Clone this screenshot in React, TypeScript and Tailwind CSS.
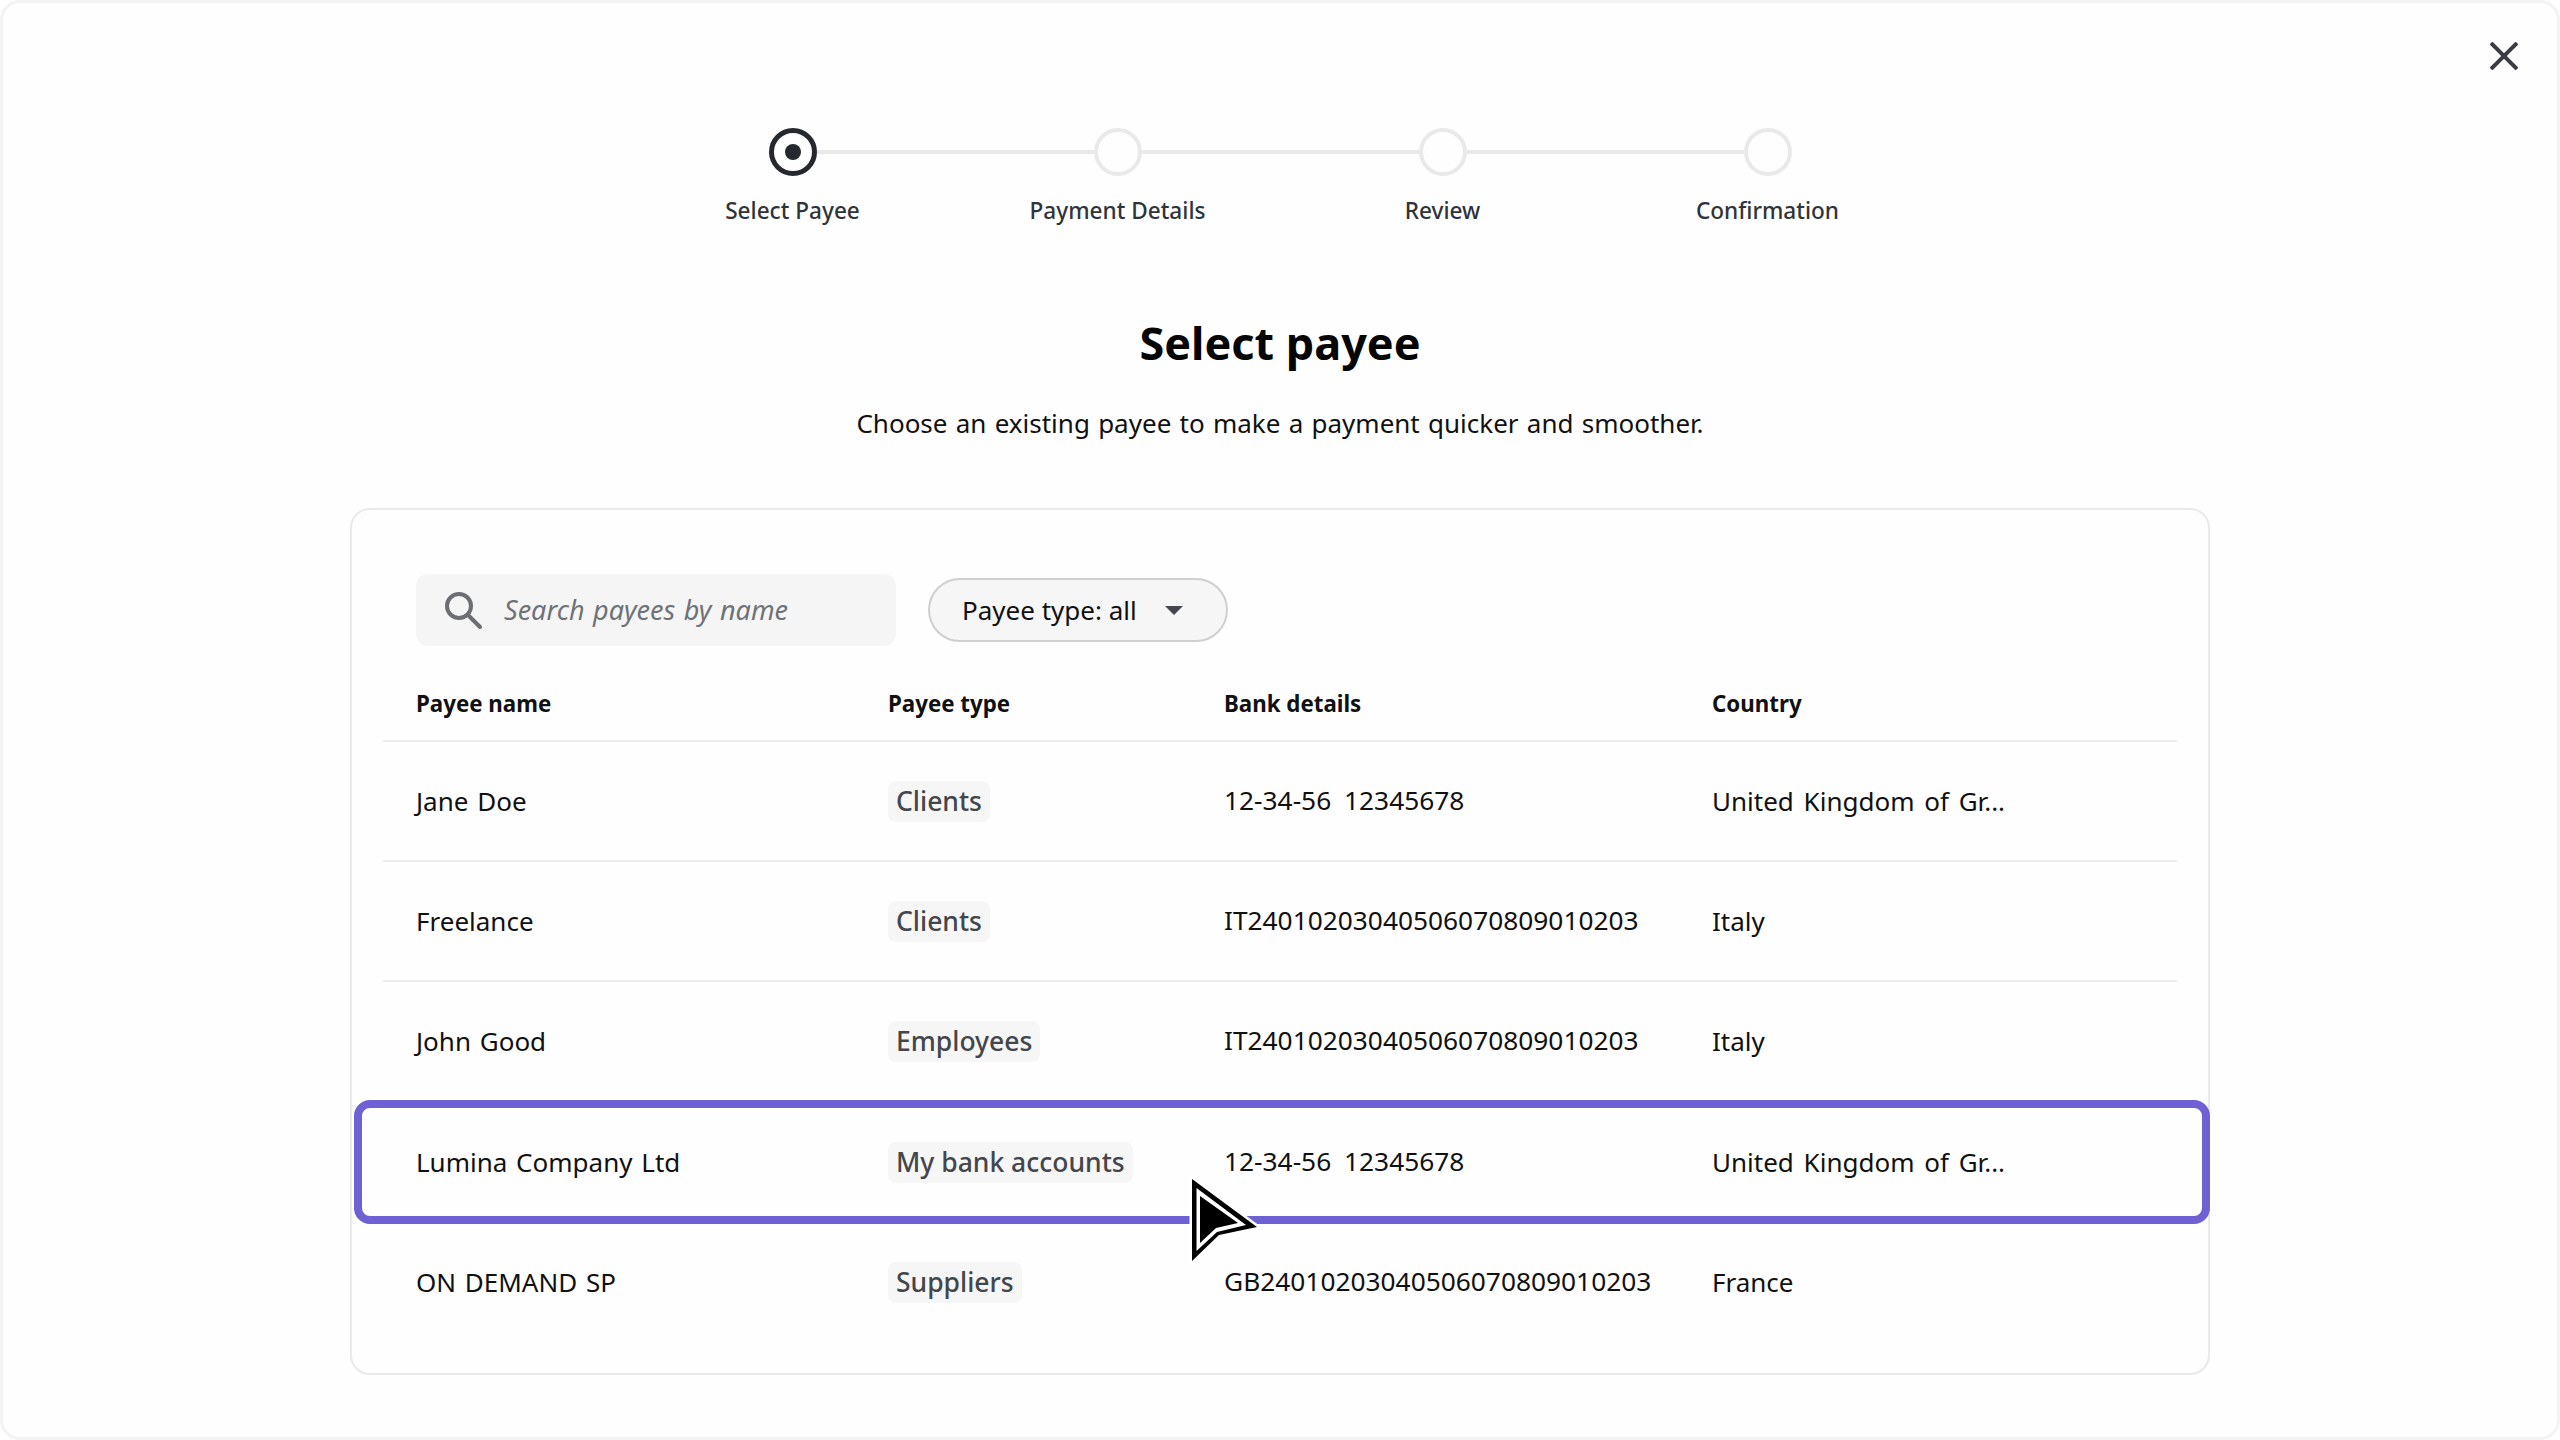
const rows = [
  { name: "Jane Doe", type: "Clients", bank: "12-34-56 12345678", country: "United Kingdom of Gr..." },
  { name: "Freelance", type: "Clients", bank: "IT24010203040506070809010203", country: "Italy" },
  { name: "John Good", type: "Employees", bank: "IT24010203040506070809010203", country: "Italy" },
  { name: "Lumina Company Ltd", type: "My bank accounts", bank: "12-34-56 12345678", country: "United Kingdom of Gr...", selected: true },
  { name: "ON DEMAND SP", type: "Suppliers", bank: "GB24010203040506070809010203", country: "France" },
];

const steps = ["Select Payee", "Payment Details", "Review", "Confirmation"];

function Stepper() {
  return (
    <div className="w-[1300px]">
      <div className="flex items-center justify-center">
        {steps.map((step, i) => (
          <div key={step} className="flex items-center">
            {i === 0 ? (
              <div className="flex h-12 w-12 items-center justify-center rounded-full border-[5px] border-[#25282d]">
                <div className="h-4 w-4 rounded-full bg-[#25282d]" />
              </div>
            ) : (
              <div className="h-12 w-12 rounded-full border-[4px] border-[#e9e9e9]" />
            )}
            {i < steps.length - 1 && <div className="h-1 w-[277px] bg-[#e9e9e9]" />}
          </div>
        ))}
      </div>
      <div className="mt-[19px] grid grid-cols-4 text-center text-[22.6px] leading-[32px] font-medium text-[#30343a]">
        {steps.map((step) => (
          <div key={step}>{step}</div>
        ))}
      </div>
    </div>
  );
}

function Row({ row, last }: { row: (typeof rows)[number]; last: boolean }) {
  return (
    <div className={`relative flex h-[120px] items-center pl-[33px] text-[26px] text-[#111] ${last ? "" : "border-b-2 border-[#ececec]"}`}>
      <div className="w-[472px] [word-spacing:2px]">{row.name}</div>
      <div className="w-[336px]">
        <span className="inline-block rounded-lg bg-[#f6f6f6] px-2 text-[26.5px] leading-[41px] font-medium text-[#43464b]">{row.type}</span>
      </div>
      <div className="w-[488px] text-[26.3px] [word-spacing:6px]">{row.bank}</div>
      <div className="[word-spacing:3px]">{row.country}</div>
      {row.selected && (
        <div className="absolute top-[-2px] right-[-33px] left-[-29px] h-[124px] rounded-2xl border-[8px] border-[#6f60d4]" />
      )}
    </div>
  );
}

function Cursor() {
  return (
    <svg className="absolute top-[1173px] left-[1183px]" width="76" height="90" viewBox="0 0 76 90">
      <path d="M6 3 L71 51 L33 59 L6 85 Z" fill="#fff" stroke="#fff" strokeWidth="5" />
      <path d="M6 3 L71 51 L33 59 L6 85 Z M10.5 12 L10.500 75 L31 56 L60 49 Z" fill="#000" fillRule="evenodd" />
      <path d="M14 20 L14 67 L30 52 L52 47 Z" fill="#000" />
    </svg>
  );
}

export default function App() {
  return (
    <div
      className="relative flex h-[1440px] w-[2560px] flex-col items-center overflow-hidden rounded-[20px] border-[3px] border-[#f3f3f3] bg-[#fefefe] pt-[125px]"
      style={{ fontFamily: '"Noto Sans", sans-serif' }}
    >
      <svg className="absolute top-[39px] right-[39px]" width="28" height="28" viewBox="0 0 28 28" fill="none" stroke="#3a3d42" strokeWidth="4">
        <path d="M1 1 L27 27 M27 1 L1 27" />
      </svg>

      <Stepper />

      <h1 className="mt-[84px] text-center text-[45px] leading-[64px] font-bold text-[#050505]">Select payee</h1>
      <p className="mt-[30px] text-center text-[26px] leading-[36px] [word-spacing:1.5px] text-[#111]">Choose an existing payee to make a payment quicker and smoother.</p>

      <div className="mt-[67px] h-[867px] w-[1860px] rounded-[20px] border-2 border-[#e9e9e9] px-[31px] pt-[64px]">
        <div className="flex items-center gap-8 pl-[33px]">
          <div className="flex h-[72px] w-[480px] items-center gap-[22px] rounded-xl bg-[#f5f5f5] pl-7">
            <svg width="38" height="38" viewBox="0 0 38 38" fill="none" stroke="#6b6e73" strokeWidth="4">
              <circle cx="15" cy="15" r="12" />
              <path d="M24 24 L36 36" strokeLinecap="round" />
            </svg>
            <span className="text-[27px] [word-spacing:1.5px] text-[#6f7277] italic">Search payees by name</span>
          </div>
          <div className="flex h-16 w-[300px] items-center rounded-full border-2 border-[#cfcfcf] bg-[#f6f6f6] pl-[32px] text-[26px] text-[#111]">
            Payee type: all
            <div className="ml-[28px] h-0 w-0 border-x-[9px] border-t-[9px] border-x-transparent border-t-[#44474c]" />
          </div>
        </div>

        <div className="flex h-[96px] items-center border-b-2 border-[#ececec] pt-[21px] pl-[33px] text-[22.3px] font-bold text-[#111]">
          <div className="w-[472px]">Payee name</div>
          <div className="w-[336px]">Payee type</div>
          <div className="w-[488px]">Bank details</div>
          <div>Country</div>
        </div>

        {rows.map((row, i) => (
          <Row key={row.name} row={row} last={i >= rows.length - 2} />
        ))}
      </div>

      <Cursor />
    </div>
  );
}
